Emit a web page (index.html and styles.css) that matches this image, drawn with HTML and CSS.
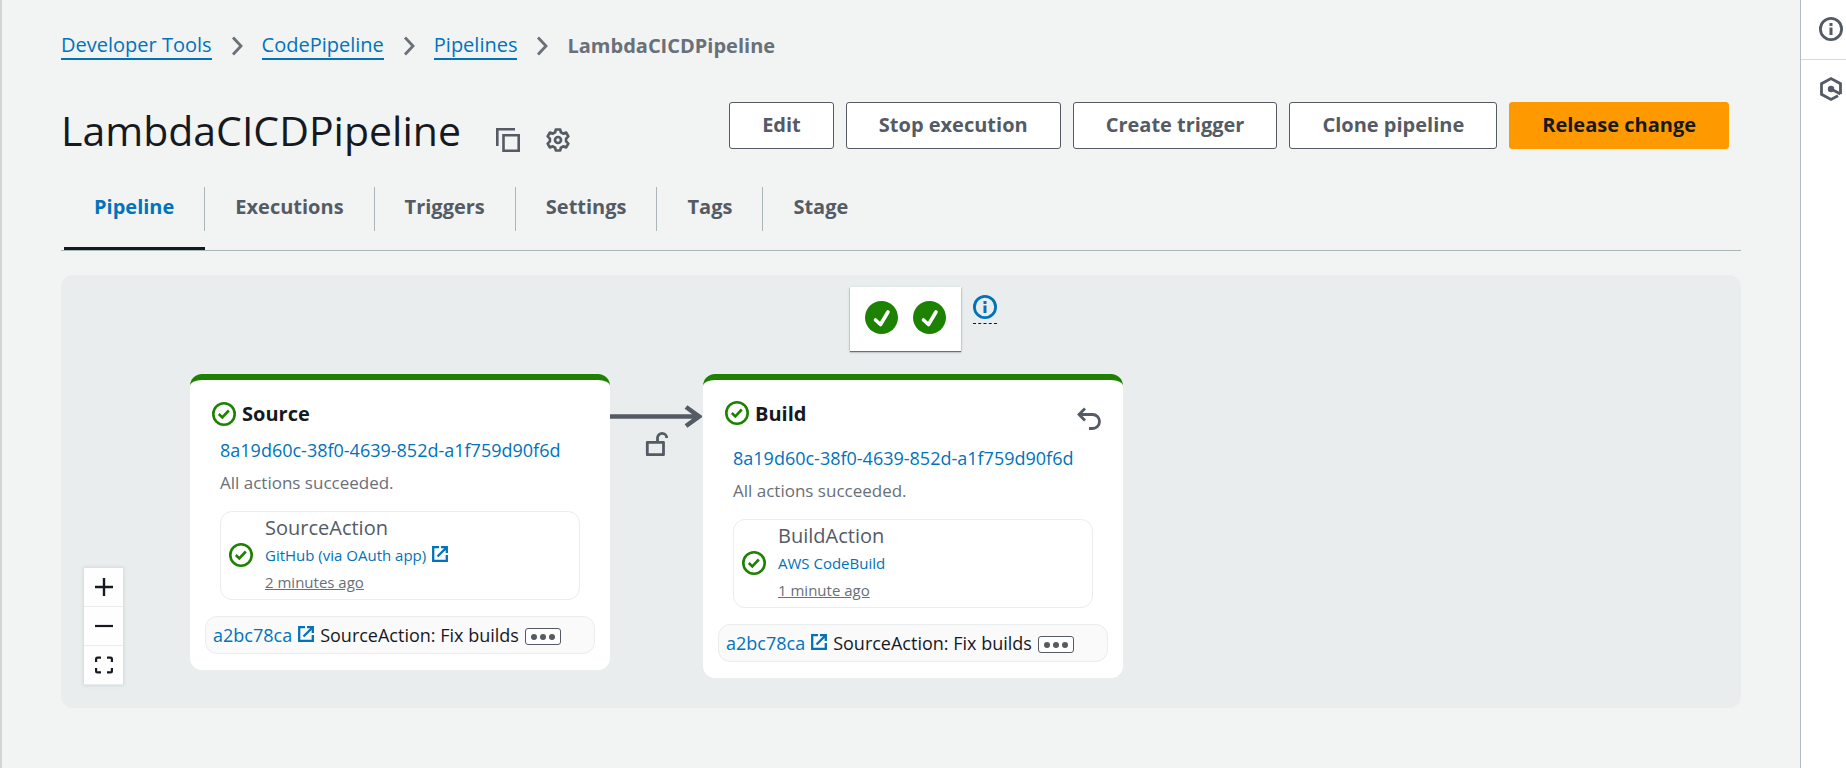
FILE: index.html
```html
<!DOCTYPE html>
<html lang="en">
<head>
<meta charset="utf-8">
<title>LambdaCICDPipeline</title>
<link rel="stylesheet" href="styles.css">
</head>
<body>
<svg class="sprite" aria-hidden="true">
  <symbol id="chevron" viewBox="0 0 12 20"><path d="M2 1.500l8 8.500-8 8.500" fill="none" stroke="currentColor" stroke-width="2.800"/></symbol>
  <symbol id="check" viewBox="0 0 24 24"><circle cx="12" cy="12" r="10.700" fill="none" stroke="currentColor" stroke-width="2.600"/><path d="M6.800 12l3.500 3.400 6.500-6.900" fill="none" stroke="currentColor" stroke-width="2.600"/></symbol>
  <symbol id="done" viewBox="0 0 33 33"><circle cx="16.500" cy="16.500" r="16.500" fill="currentColor"/><path d="M10.500 19l5 4.500L23 11" fill="none" stroke="#fff" stroke-width="3.600" stroke-linecap="round" stroke-linejoin="round"/></symbol>
  <symbol id="info" viewBox="0 0 24 24"><circle cx="12" cy="12" r="10.600" fill="none" stroke="currentColor" stroke-width="2.800"/><path d="M12 6v3M12 10.500V18" stroke="currentColor" stroke-width="3"/></symbol>
  <symbol id="external" viewBox="0 0 16 16"><path d="M7 1.200H1.200v13.600h13.600V9M9 1.200h5.800V7M14.500 1.500L5.500 10.500" fill="none" stroke="currentColor" stroke-width="2.300"/></symbol>
</svg>
<div class="shell">
  <main class="main">
    <nav class="crumbs" aria-label="Breadcrumb">
      <a href="#">Developer Tools</a><svg><use href="#chevron"/></svg>
      <a href="#">CodePipeline</a><svg><use href="#chevron"/></svg>
      <a href="#">Pipelines</a><svg><use href="#chevron"/></svg>
      <span class="here">LambdaCICDPipeline</span>
    </nav>
    <header class="header">
      <div class="heading">
        <h1>LambdaCICDPipeline</h1>
        <button class="plain" aria-label="Copy"><svg class="icon" viewBox="0 0 24 24" fill="none" stroke="currentColor" stroke-width="2.600"><path d="M1.300 18V1.300H19"/><path d="M7.500 7.300h15.200v15.400H7.500z"/></svg></button>
        <button class="plain" aria-label="Settings"><svg class="icon" viewBox="0 0 24 24" fill="none" stroke="currentColor" stroke-width="2.700" stroke-linejoin="round"><path d="M9.800 1.500h4.400l.7 2.800 2.300 1.300 3-1 2.100 3.800-2.200 2.200v2.800l2.200 2.200-2.100 3.800-3-1-2.300 1.300-.7 2.800H9.800l-.7-2.800-2.300-1.300-3 1-2.100-3.800 2.200-2.200v-2.800L1.700 8.400l2.100-3.800 3 1 2.300-1.300z"/><circle cx="12" cy="12" r="3"/></svg></button>
      </div>
      <div class="actions">
        <button class="btn">Edit</button>
        <button class="btn">Stop execution</button>
        <button class="btn">Create trigger</button>
        <button class="btn">Clone pipeline</button>
        <button class="btn primary">Release change</button>
      </div>
    </header>
    <div class="tabs" role="tablist">
      <button class="tab active" role="tab" aria-selected="true"><span>Pipeline</span></button>
      <button class="tab" role="tab"><span>Executions</span></button>
      <button class="tab" role="tab"><span>Triggers</span></button>
      <button class="tab" role="tab"><span>Settings</span></button>
      <button class="tab" role="tab"><span>Tags</span></button>
      <button class="tab" role="tab"><span>Stage</span></button>
    </div>
    <section class="canvas">
      <div class="overview">
        <div class="statuses">
          <svg><use href="#done"/></svg><svg><use href="#done"/></svg>
        </div>
        <button class="hint" aria-label="Info"><svg class="icon"><use href="#info"/></svg></button>
      </div>

      <article class="stage source">
        <div class="stage-head">
          <svg class="icon ok"><use href="#check"/></svg><h2>Source</h2>
        </div>
        <a class="run" href="#">8a19d60c-38f0-4639-852d-a1f759d90f6d</a>
        <p class="note">All actions succeeded.</p>
        <div class="action">
          <svg class="icon ok"><use href="#check"/></svg>
          <div class="action-text">
            <h3>SourceAction</h3>
            <a href="#">GitHub (via OAuth app)<svg class="ext"><use href="#external"/></svg></a>
            <span class="ago">2 minutes ago</span>
          </div>
        </div>
        <div class="revision">
          <a href="#">a2bc78ca<svg class="ext"><use href="#external"/></svg></a>
          <span>SourceAction: Fix builds</span>
          <button class="more" aria-label="More"><i></i><i></i><i></i></button>
        </div>
      </article>

      <div class="link">
        <svg class="arrow" viewBox="0 0 92 24" fill="none" stroke="currentColor" stroke-width="4.600"><path d="M0 11.500h89M76 2l13 9.500L76 21"/></svg>
        <svg class="icon" viewBox="0 0 24 24" fill="none" stroke="currentColor" stroke-width="2.800" stroke-linejoin="round"><path d="M2.300 10.300h16.200v12.400H2.300zM12.500 10V6a4.600 4.600 0 0 1 9.200 0"/></svg>
      </div>

      <article class="stage build">
        <div class="stage-head">
          <svg class="icon ok"><use href="#check"/></svg><h2>Build</h2>
          <button class="plain undo" aria-label="Roll back"><svg class="icon" viewBox="0 0 24 24" fill="none" stroke="currentColor" stroke-width="2.800"><path d="M8 1.500L2 7.500l6 6M2 7.500h13.500a7 7 0 0 1 0 14H12"/></svg></button>
        </div>
        <a class="run" href="#">8a19d60c-38f0-4639-852d-a1f759d90f6d</a>
        <p class="note">All actions succeeded.</p>
        <div class="action">
          <svg class="icon ok"><use href="#check"/></svg>
          <div class="action-text">
            <h3>BuildAction</h3>
            <a href="#">AWS CodeBuild</a>
            <span class="ago">1 minute ago</span>
          </div>
        </div>
        <div class="revision">
          <a href="#">a2bc78ca<svg class="ext"><use href="#external"/></svg></a>
          <span>SourceAction: Fix builds</span>
          <button class="more" aria-label="More"><i></i><i></i><i></i></button>
        </div>
      </article>

      <div class="zoom">
        <button aria-label="Zoom in"><svg viewBox="0 0 18 18" fill="none" stroke="currentColor" stroke-width="2.400"><path d="M0 9h18M9 0v18"/></svg></button>
        <button aria-label="Zoom out"><svg viewBox="0 0 18 18" fill="none" stroke="currentColor" stroke-width="2.200"><path d="M0 9h18"/></svg></button>
        <button aria-label="Fit view"><svg viewBox="0 0 18 18" fill="none" stroke="currentColor" stroke-width="2.200"><path d="M1.100 6V3q0-1.400 1.400-1.400H6M12 1.600h3.500q1.400 0 1.400 1.400v3M16.900 12v3q0 1.400-1.400 1.400H12M6 16.400H2.500q-1.400 0-1.400-1.400v-3"/></svg></button>
      </div>
    </section>
  </main>
  <aside class="rail">
    <button aria-label="Info"><svg class="icon"><use href="#info"/></svg></button>
    <button aria-label="Assistant"><svg class="icon" viewBox="0 0 24 24" fill="none" stroke="currentColor" stroke-width="2.800"><path d="M21.500 17V6.700L12 1.600 2.500 6.700v10.600L12 22.400l7-3.700"/><path d="M12 12l9.500 5"/><circle cx="12" cy="12" r="3.200" fill="currentColor" stroke="none"/></svg></button>
  </aside>
</div>
</body>
</html>
```

FILE: styles.css
```css
* { box-sizing: border-box; }
body {
  margin: 0;
  background: #f2f3f3;
  color: #16191f;
  font-family: "Open Sans", "Noto Sans", sans-serif;
  font-size: 18px;
  line-height: 24px;
}
h1, h2, h3, p { margin: 0; }
a { color: #0073bb; text-decoration: none; }
button { font: inherit; color: inherit; cursor: pointer; }
svg { display: block; flex: none; }
.sprite { position: absolute; width: 0; height: 0; }
.icon { width: 24px; height: 24px; }
.ok { color: #1d8102; }
.plain { padding: 0; border: 0; background: none; color: #545b64; }

.shell { display: flex; min-height: 100vh; border-left: 2px solid #d0d5d6; }
.main { flex: 1; padding: 32px 59px 56px; }
.rail { width: 46px; background: #fff; border-left: 1px solid #b4babd; color: #545b64; overflow: hidden; }
.rail button { display: flex; width: 46px; height: 60px; padding: 0 0 2px 18px; align-items: center; border: 0; border-bottom: 1px solid #d5dbdb; background: none; }
.rail button:last-child { border-bottom: 0; }

.crumbs { display: flex; align-items: center; gap: 19px; font-size: 20px; line-height: 26px; color: #687078; }
.crumbs a { border-bottom: 2px solid #0073bb; }
.crumbs svg { width: 12px; height: 20px; }
.crumbs .here { font-weight: 700; }

.header { display: flex; justify-content: space-between; align-items: flex-start; margin-top: 42px; padding-right: 12px; }
.heading { display: flex; align-items: center; gap: 26px; }
.heading .plain { padding-top: 18px; }
.heading h1 { margin-right: 9px; padding-bottom: 2px; font-size: 41px; line-height: 56px; font-weight: 400; }
.actions { display: flex; gap: 12px; }
.btn { height: 47px; padding: 0 32px 2px; border: 1px solid #545b64; border-radius: 3px; background: #fff; color: #545b64; font-size: 20px; font-weight: 700; line-height: 28px; }
.btn.primary { border-color: #f90; background: #f90; color: #16191f; }

.tabs { display: flex; margin-top: 27px; padding-left: 3px; border-bottom: 1px solid #aab7b8; }
.tab { height: 63px; padding: 0 0 16px; border: 0; border-bottom: 3px solid transparent; background: none; color: #545b64; font-size: 20px; font-weight: 700; }
.tab span { display: flex; align-items: center; height: 44px; padding: 0 30px 4px; border-right: 1px solid #aab7b8; }
.tab:last-child span { border-right: 0; }
.tab.active { border-bottom-color: #16191f; color: #0073bb; }

.canvas { position: relative; height: 433px; margin-top: 24px; padding-top: 12px; border-radius: 12px; background: #e9eded; }
.overview { display: grid; grid-template-columns: 1fr auto 1fr; align-items: start; gap: 12px; padding-left: 9px; }
.statuses { grid-column: 2; display: flex; gap: 15px; padding: 14px 15px 17px; background: #fff; box-shadow: 0 1px 1px #687078, 0 1px 3px #bbc2c4; color: #1d8102; }
.statuses svg { width: 33px; height: 33px; }
.hint { justify-self: start; margin-top: 8px; padding: 0 0 4px; border: 0; border-bottom: 1px dashed #16191f; background: none; color: #0073bb; }

.stage { position: absolute; top: 99px; width: 420px; padding: 21px 16px 16px; border-top: 6px solid #1d8102; border-radius: 12px; background: #fff; }
.source { left: 129px; }
.build { left: 642px; }
.stage-head { display: flex; align-items: center; gap: 6px; min-height: 25px; padding: 0 6px; }
.stage-head h2 { font-size: 20px; font-weight: 700; line-height: 25px; }
.build .stage-head { align-items: flex-start; min-height: 33px; }
.undo { margin: 6px 0 0 auto; }
.run, .note { display: block; margin-left: 14px; }
.run { margin-top: 12px; line-height: 24px; }
.note { margin-top: 9px; color: #687078; font-size: 17px; }
.action { display: flex; align-items: center; gap: 12px; width: 360px; margin: 16px 0 0 14px; padding: 2px 8px 3px; border: 1px solid #eaeded; border-radius: 12px; }
.action-text { display: flex; flex-direction: column; font-size: 15px; line-height: 27px; }
.action-text h3 { color: #545b64; font-size: 20px; font-weight: 400; line-height: 28px; }
.action a, .revision a { display: flex; align-items: center; gap: 6px; }
.ext { width: 16px; height: 16px; }
.action .ext { margin-bottom: 4px; }
.ago { color: #687078; text-decoration: underline; }
.revision { display: flex; align-items: center; gap: 6px; margin: 16px -1px 0; padding: 6px 7px; border: 1px solid #eaeded; border-radius: 12px; background: #fafafa; }
.revision .ext { margin-bottom: 3px; }
.more { display: flex; align-items: center; justify-content: center; gap: 3px; width: 36px; height: 17px; margin-top: 3px; padding: 0; border: 1px solid #545b64; border-radius: 3px; background: #fff; }
.more i { width: 6px; height: 6px; border-radius: 50%; background: #545b64; }

.link { position: absolute; left: 549px; top: 130px; color: #545b64; }
.link .arrow { width: 92px; height: 24px; }
.link .icon { margin: 3px 0 0 35px; }

.zoom { position: absolute; left: 23px; bottom: 23px; display: flex; flex-direction: column; box-shadow: 0 0 3px 1px #d3d8d9; }
.zoom button { display: flex; align-items: center; justify-content: center; width: 39px; height: 39px; padding: 0; border: 0; border-bottom: 1px solid #eaeded; background: #fefefe; }
.zoom svg { width: 18px; height: 18px; }
```
